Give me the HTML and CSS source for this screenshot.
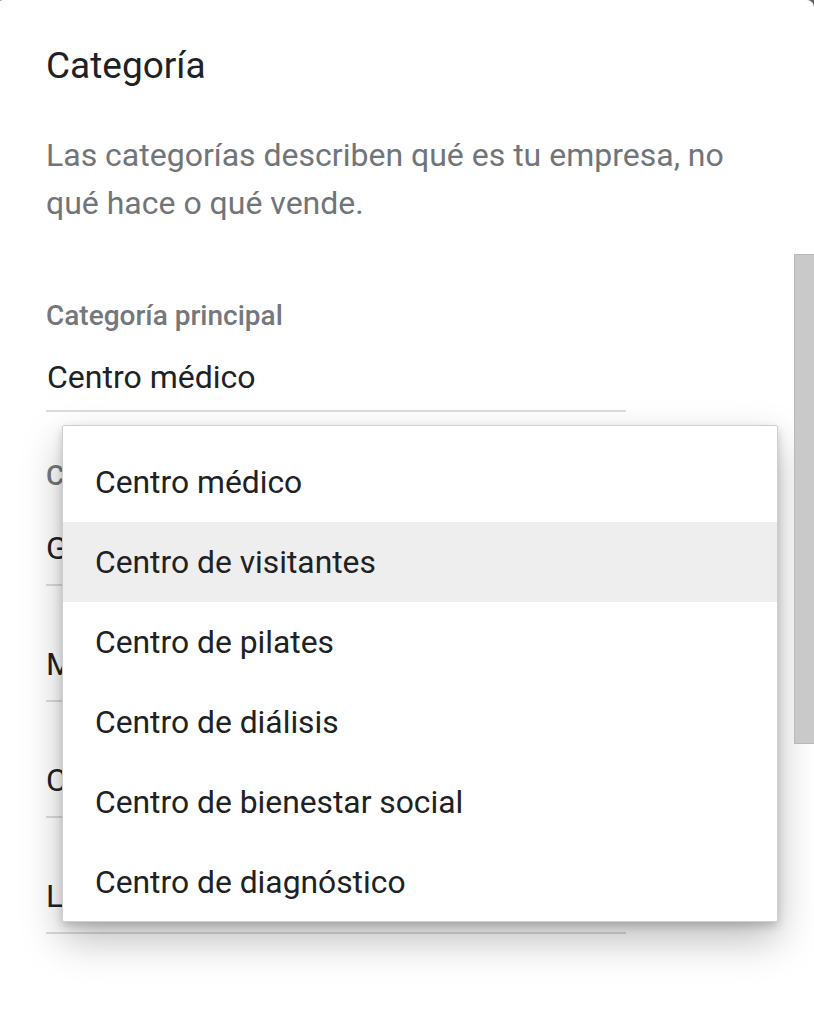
FILE: index.html
```html
<!DOCTYPE html>
<html lang="es">
<head>
<meta charset="utf-8">
<title>Categoría</title>
<link rel="stylesheet" href="styles.css">
</head>
<body>
<div class="card">
  <h1 class="title">Categoría</h1>
  <p class="desc">Las categorías describen qué es tu empresa, no qué hace o qué vende.</p>

  <div class="field main">
    <div class="label">Categoría principal</div>
    <div class="value">Centro médico</div>
  </div>

  <div class="field extra">
    <div class="label">Categorías adicionales</div>
    <div class="row first"><div class="value">Ginecólogo</div></div>
    <div class="row"><div class="value">Médico</div></div>
    <div class="row"><div class="value">Clínica</div></div>
    <div class="row"><div class="value">Laboratorio</div></div>
  </div>

  <div class="menu">
    <div class="item">Centro médico</div>
    <div class="item active">Centro de visitantes</div>
    <div class="item">Centro de pilates</div>
    <div class="item">Centro de diálisis</div>
    <div class="item">Centro de bienestar social</div>
    <div class="item">Centro de diagnóstico</div>
  </div>

  <div class="scrollbar"></div>
</div>
</body>
</html>
```

FILE: styles.css
```css
html, body {
  margin: 0;
  padding: 0;
  height: 100%;
}
body {
  background: #5f5f5f;
  font-family: Roboto, "Liberation Sans", sans-serif;
  overflow: hidden;
}
.card {
  position: relative;
  background: #ffffff;
  margin-left: -4px;
  width: 818px;
  min-height: 1016px;
  border-radius: 7px 7px 0 0;
  padding: 44px 0 0 50px;
  box-sizing: border-box;
}
.title {
  margin: 0;
  font-size: 37px;
  line-height: 44px;
  font-weight: 400;
  color: #202124;
}
.desc {
  margin: 43px 0 0 0;
  width: 700px;
  font-size: 32px;
  line-height: 48px;
  color: #70757a;
}
.field {
  width: 580px;
}
.main {
  margin-top: 72px;
  padding-bottom: 13px;
  border-bottom: 2px solid #dadce0;
}
.label {
  font-size: 28px;
  line-height: 34px;
  font-weight: 500;
  color: #74787d;
}
.value {
  font-size: 32px;
  line-height: 40px;
  color: #202124;
}
.main .value {
  margin-top: 24px;
  padding-left: 1px;
}
.extra {
  margin-top: 47px;
}
.row {
  padding-top: 58px;
  padding-bottom: 16px;
  border-bottom: 2px solid #dadce0;
}
.row.first {
  padding-top: 35px;
}
.menu {
  position: absolute;
  left: 66px;
  top: 425px;
  width: 716px;
  height: 497px;
  box-sizing: border-box;
  padding-top: 16px;
  background: #ffffff;
  border: 1px solid #cfcfcf;
  border-radius: 2px;
  box-shadow: 0 18px 40px rgba(0, 0, 0, 0.26), 0 4px 10px rgba(0, 0, 0, 0.18);
}
.item {
  height: 80px;
  line-height: 80px;
  padding-left: 32px;
  font-size: 31.8px;
  color: #202124;
}
.item.active {
  background: #eeeeee;
}
.scrollbar {
  position: absolute;
  right: 0;
  top: 254px;
  width: 20px;
  height: 490px;
  box-sizing: border-box;
  background: #c9c9c9;
  border: 1px solid #b8b8b8;
  border-right: none;
}
```
